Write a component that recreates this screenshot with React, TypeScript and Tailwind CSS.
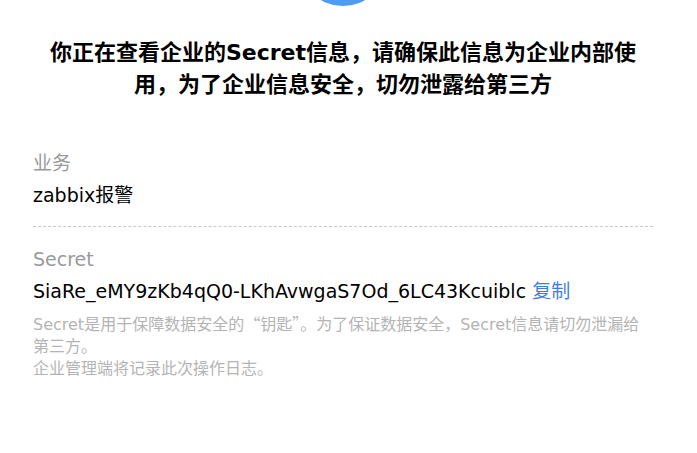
import React from "react";

export default function App() {
  const font = {
    fontFamily: '"DejaVu Sans", "Noto Sans CJK SC", sans-serif',
  };
  const cjk = { fontFamily: '"Noto Sans CJK SC", sans-serif' };
  return (
    <div className="w-[697px] h-[453px] overflow-hidden bg-white" style={font}>
      <div className="w-[686px] flex flex-col items-center">
        <div className="w-[88px] h-[88px] -mt-[82px] rounded-full bg-[#4f9cf6] shrink-0" />
        <h1 className="mt-[31px] w-[600px] text-center text-[22px] leading-[32px] font-bold text-black">
          你正在查看企业的Secret信息，请确保此信息为企业内部使用，为了企业信息安全，切勿泄露给第三方
        </h1>
        <div className="w-[620px] mt-[46px]">
          <div className="text-[19px] leading-[32px] text-[#9a9a9a]">业务</div>
          <div className="text-[19px] leading-[33px] text-black">zabbix报警</div>
          <div className="mt-[14px] border-t border-dashed border-[#c8c8c8]" />
          <div className="mt-[16px] text-[19px] leading-[32px] text-[#9a9a9a]">Secret</div>
          <div className="text-[19px] leading-[32px] text-black">
            SiaRe_eMY9zKb4qQ0-LKhAvwgaS7Od_6LC43Kcuiblc{" "}
            <span className="text-[#3d7fe0] cursor-pointer">复制</span>
          </div>
          <div className="mt-[5px] text-[16px] leading-[22px] text-[#b4b4b4]">
            <p>
              Secret是用于保障数据安全的<span style={cjk}>“</span>钥匙<span style={cjk}>”</span>。为了保证数据安全，Secret信息请切勿泄漏给第三方。
            </p>
            <p>企业管理端将记录此次操作日志。</p>
          </div>
        </div>
      </div>
    </div>
  );
}
